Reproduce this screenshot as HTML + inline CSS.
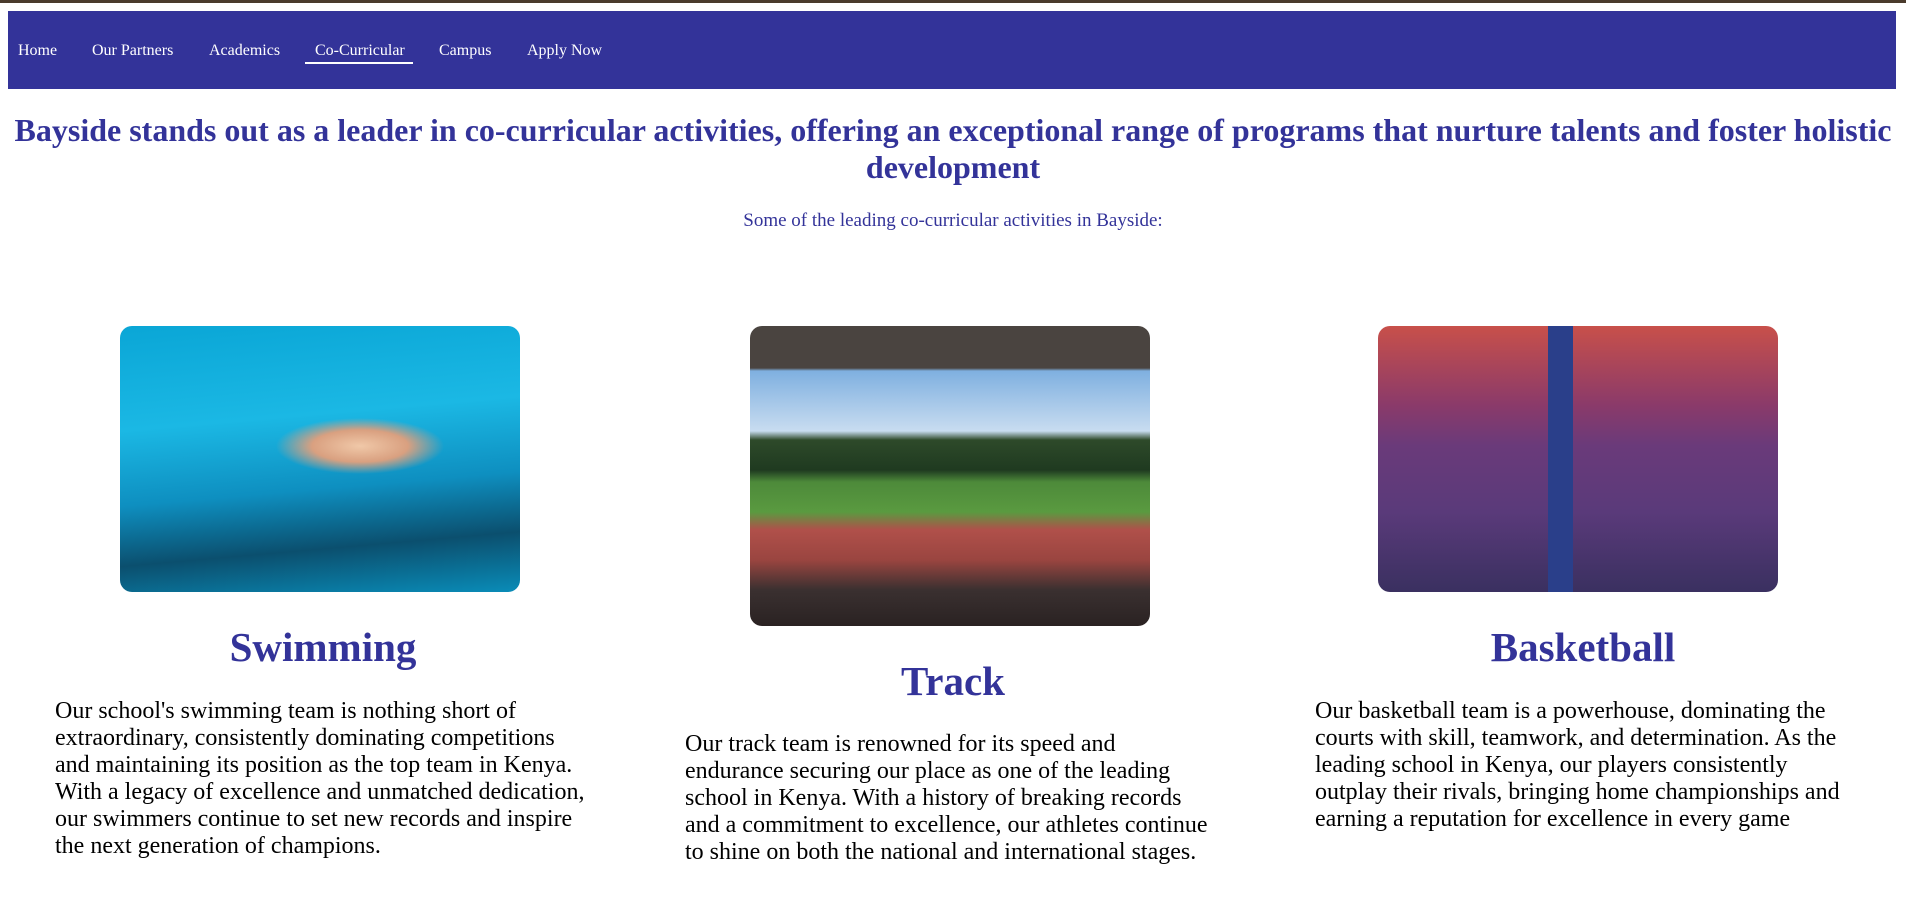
<!DOCTYPE html>
<html><head><meta charset="utf-8"><style>
*{margin:0;padding:0;box-sizing:border-box}
body{width:1906px;height:903px;background:#fff;font-family:"Liberation Serif",serif;position:relative;overflow:hidden}
.topb{position:absolute;left:0;top:0;width:1906px;height:3px;background:#4a3b2c}
.nav{position:absolute;left:8px;top:11px;width:1888px;height:78px;background:#333399}
.nav a{position:absolute;top:31px;color:#fff;font-size:16px;text-decoration:none;white-space:nowrap}
.act{position:absolute;left:297px;top:51px;width:108px;height:2px;background:#fff}
h1{position:absolute;left:0;top:112px;width:1906px;text-align:center;color:#333399;font-size:32px;line-height:37px;font-weight:bold}
.sub{position:absolute;left:0;top:210px;width:1906px;text-align:center;color:#333399;font-size:19px}
.img{position:absolute;width:400px;border-radius:12px;overflow:hidden}
.t{position:absolute;width:630px;text-align:center;color:#333399;font-weight:bold;font-size:41px;line-height:48px}
.p{position:absolute;color:#000;font-size:24px;line-height:27px;white-space:nowrap}
</style></head><body>
<div class="topb"></div>
<div class="nav">
<a style="left:10px">Home</a><a style="left:84px">Our Partners</a><a style="left:201px">Academics</a><a style="left:307px">Co-Curricular</a><a style="left:431px">Campus</a><a style="left:519px">Apply Now</a>
<div class="act"></div>
</div>
<h1>Bayside stands out as a leader in co-curricular activities, offering an exceptional range of programs that nurture talents and foster holistic<br>development</h1>
<div class="sub">Some of the leading co-curricular activities in Bayside:</div>

<div class="img" style="left:120px;top:326px;height:266px;background:
radial-gradient(ellipse 120px 40px at 240px 120px,#f0c8a8 0,#d9a080 40%,transparent 70%),
linear-gradient(175deg,#0aa6d6 0%,#1bb8e4 35%,#0e8fc0 60%,#0b4f6e 80%,#0a8cb8 100%)"></div>

<div class="img" style="left:750px;top:326px;height:300px;background:
linear-gradient(180deg,#4a4440 0%,#4a4440 14%,#7fb0e0 15%,#c8dcf0 35%,#2e4a2a 38%,#1f3a20 48%,#4d8a3a 52%,#5a9a40 62%,#b0504a 68%,#9a4540 78%,#3a3030 88%,#2a2222 100%)"></div>

<div class="img" style="left:1378px;top:326px;height:266px;background:
linear-gradient(90deg,transparent 0,transparent 170px,#2a3f8a 170px,#2a3f8a 195px,transparent 195px),
linear-gradient(180deg,#c8504a 0%,#8a3a6a 30%,#6a3a7a 45%,#5a3a7a 70%,#3a3060 100%)"></div>

<div class="t" style="left:8px;top:623px">Swimming</div>
<div class="t" style="left:638px;top:657px">Track</div>
<div class="t" style="left:1268px;top:623px">Basketball</div>

<div class="p" style="left:55px;top:698px">Our school's swimming team is nothing short of<br>extraordinary, consistently dominating competitions<br>and maintaining its position as the top team in Kenya.<br>With a legacy of excellence and unmatched dedication,<br>our swimmers continue to set new records and inspire<br>the next generation of champions.</div>
<div class="p" style="left:685px;top:731px">Our track team is renowned for its speed and<br>endurance securing our place as one of the leading<br>school in Kenya. With a history of breaking records<br>and a commitment to excellence, our athletes continue<br>to shine on both the national and international stages.</div>
<div class="p" style="left:1315px;top:698px">Our basketball team is a powerhouse, dominating the<br>courts with skill, teamwork, and determination. As the<br>leading school in Kenya, our players consistently<br>outplay their rivals, bringing home championships and<br>earning a reputation for excellence in every game</div>
</body></html>
